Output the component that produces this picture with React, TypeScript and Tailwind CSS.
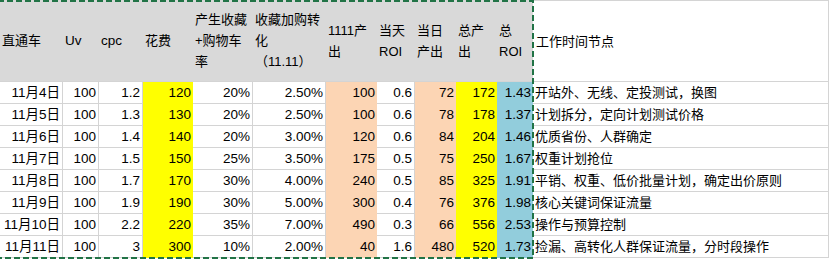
const rows: string[][] = [
  ["11月4日", "100", "1.2", "120", "20%", "2.50%", "100", "0.6", "72", "172", "1.43", "开站外、无线、定投测试，换图"],
  ["11月5日", "100", "1.3", "130", "20%", "2.50%", "100", "0.6", "78", "178", "1.37", "计划拆分，定向计划测试价格"],
  ["11月6日", "100", "1.4", "140", "20%", "3.00%", "120", "0.6", "84", "204", "1.46", "优质省份、人群确定"],
  ["11月7日", "100", "1.5", "150", "25%", "3.50%", "175", "0.5", "75", "250", "1.67", "权重计划抢位"],
  ["11月8日", "100", "1.7", "170", "30%", "4.00%", "240", "0.5", "85", "325", "1.91", "平销、权重、低价批量计划，确定出价原则"],
  ["11月9日", "100", "1.9", "190", "30%", "5.00%", "300", "0.4", "76", "376", "1.98", "核心关键词保证流量"],
  ["11月10日", "100", "2.2", "220", "35%", "7.00%", "490", "0.3", "66", "556", "2.53", "操作与预算控制"],
  ["11月11日", "100", "3", "300", "10%", "2.00%", "40", "1.6", "480", "520", "1.73", "捡漏、高转化人群保证流量，分时段操作"],
];

const headers: React.ReactNode[] = [
  "直通车",
  "Uv",
  "cpc",
  "花费",
  <>产生收藏<br />+购物车<br />率</>,
  <>收藏加购转<br />化<br />（11.11）</>,
  <>1111产<br />出</>,
  <>当天<br />ROI</>,
  <>当日<br />产出</>,
  <>总产<br />出</>,
  <>总<br />ROI</>,
  "工作时间节点",
];

const white = "bg-white border-r border-b border-[#d4d4d4]";
// fill per column, coloured cells hide the gridlines
const fills = [
  white,
  white,
  white,
  "bg-[#ffff00]",
  white,
  white,
  "bg-[#fcd5b4]",
  white,
  "bg-[#fcd5b4]",
  "bg-[#ffff00]",
  "bg-[#92cddc]",
  white,
];

export default function App() {
  return (
    <div
      className="relative w-[833px] h-[260px] bg-white overflow-hidden text-black"
      style={{ fontFamily: '"Liberation Sans", "Noto Sans CJK SC", sans-serif' }}
    >
      <div className="grid grid-cols-[63px_36px_44px_50px_60px_73px_51px_38px_41px_41px_36px_296px_4px]">
        {/* Header */}
        {headers.map((h, i) => (
          <div
            key={"h" + i}
            className={
              "h-[82px] flex items-center pl-[2px] leading-[21px] whitespace-nowrap " +
              (i === 1 || i === 2 ? "text-[13.5px] " : "text-[13px] ") +
              (i < 11 ? "bg-[#d9d9d9] border-b border-[#d4d4d4]" : "bg-white border-t border-r border-b border-[#d4d4d4] pl-[3px]")
            }
          >
            <div>{h}</div>
          </div>
        ))}
        <div className="h-[82px] bg-white" />

        {/* Rows */}
        {rows.map((r, ri) =>
          [
            ...r.map((v, ci) => (
              <div
                key={ri + "-" + ci}
                className={
                  "h-[22px] flex items-center whitespace-nowrap leading-none " +
                  fills[ci] +
                  (ci === 11 ? " justify-start pl-[2px] text-[13px]" : " justify-end pr-[2px] text-[13.5px]")
                }
              >
                {v}
              </div>
            )),
            <div key={ri + "-pad"} className="h-[22px] bg-white" />,
          ]
        )}
      </div>

      {/* copy marquee */}
      <svg className="absolute left-0 top-0" width="540" height="260">
        <rect x="-2" y="1" width="535" height="257" fill="none" stroke="#217346" strokeWidth="2" strokeDasharray="6 3" />
      </svg>
    </div>
  );
}
